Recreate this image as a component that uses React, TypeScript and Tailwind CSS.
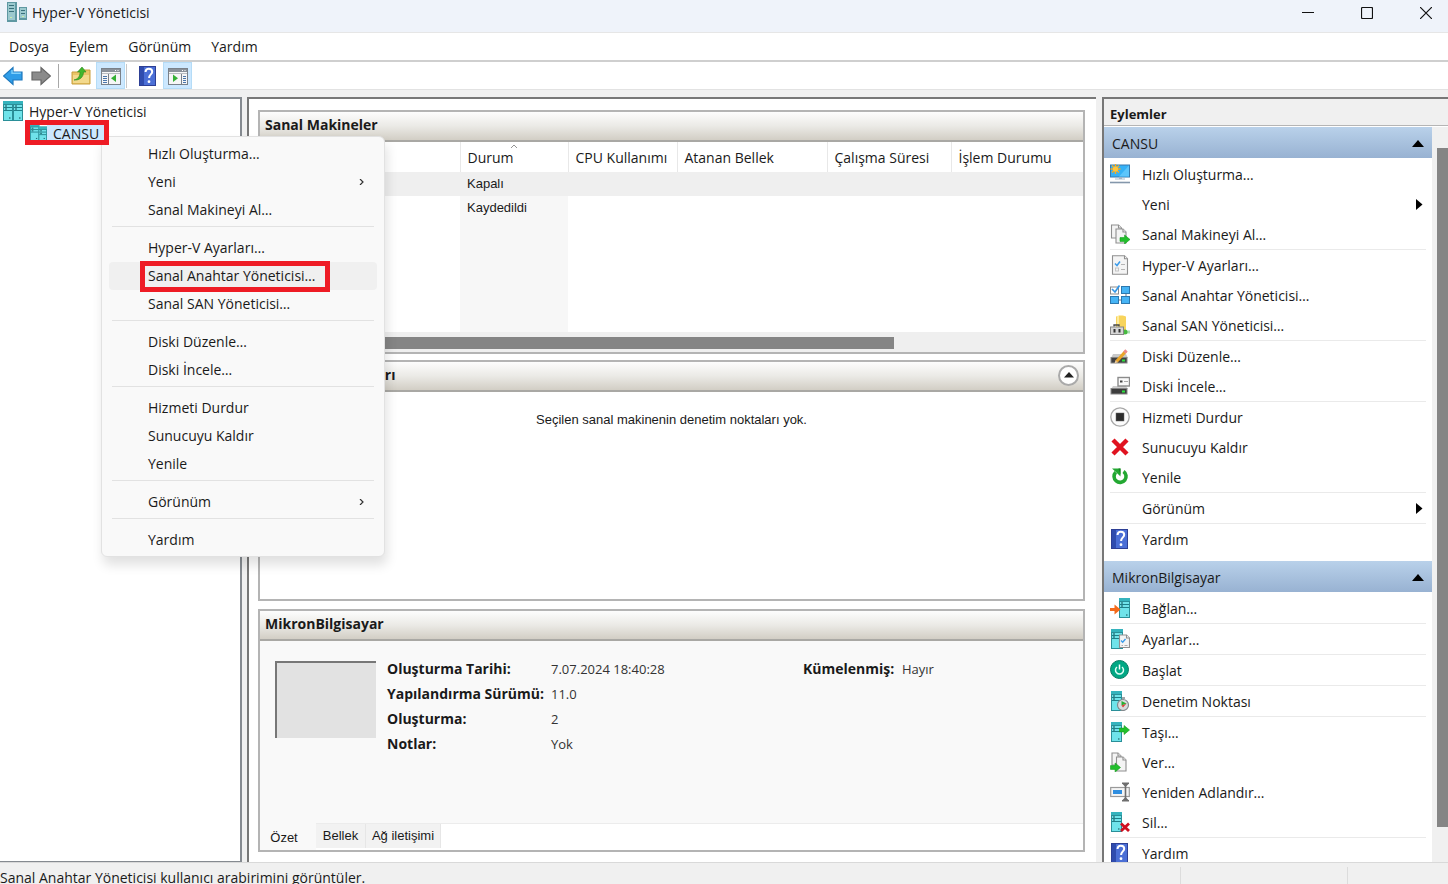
import type { ReactNode } from "react";

const HEADER_GRADIENT = "bg-linear-to-b from-[#fdfdfd] via-[#ebeae6] to-[#d2cec5]";

/* ---------- icons ---------- */

function Svg({ children, size = "size-5", box = "0 0 20 20" }: { children: ReactNode; size?: string; box?: string }) {
  return (
    <svg className={`${size} shrink-0`} viewBox={box} fill="none" aria-hidden="true">
      {children}
    </svg>
  );
}

function Tower({ x = 0, w = 11, y = 0, h = 20 }: { x?: number; w?: number; y?: number; h?: number }) {
  return (
    <g>
      <rect x={x} y={y} width={w} height={h} fill="#2a8f98" />
      <rect x={x + 1} y={y + 4} width={w - 2} height={h - 5} fill="#6fe3ea" />
      <rect x={x} y={y} width={w} height="3" fill="#35b3bd" />
      <path d={`M${x + 1} ${y + 6.5}h${w - 2}M${x + 1} ${y + 9.5}h${w - 2}`} stroke="#1f7f88" />
      <path d={`M${x + 2} ${y + 5}h2M${x + 2} ${y + 8}h2M${x + w - 4} ${y + h - 3}h1.5`} stroke="#134f57" />
    </g>
  );
}

function GreenArrow({ x, y }: { x: number; y: number }) {
  return (
    <path
      transform={`translate(${x} ${y})`}
      d="M0 2.6h4.6V0L10 4.5 4.6 9V6.4H0z"
      fill="#22c02c"
      stroke="#149a1d"
      strokeWidth="0.6"
    />
  );
}

function Page({ x, y, w = 9, h = 12 }: { x: number; y: number; w?: number; h?: number }) {
  return (
    <g stroke="#8f8f8f" strokeWidth="1.1" fill="#f4f4f4">
      <path d={`M${x} ${y}h${w - 3}l3 3v${h - 3}h-${w}z`} />
      <path d={`M${x + w - 3} ${y}v3h3`} />
    </g>
  );
}

const AppIcon = () => (
  <Svg>
    <rect x="0" y="0" width="10" height="20" fill="#5f98a2" />
    <rect x="1" y="1" width="7" height="17" fill="#9cc9ce" />
    <path d="M2 3.5h5M2 6.5h5M2 9.5h5" stroke="#39707b" />
    <rect x="12" y="5" width="8" height="13" fill="#5f98a2" />
    <rect x="13" y="6" width="6" height="10" fill="#9cc9ce" />
    <path d="M14 8.5h4M14 11.5h4" stroke="#39707b" />
    <path d="M3 15.5h2M15 14.5h2" stroke="#c9f1a9" />
  </Svg>
);

const RootIcon = () => (
  <Svg>
    <Tower x={0} w={10} />
    <Tower x={10} w={10} />
  </Svg>
);

const ServerIcon = () => (
  <Svg size="size-[17px]">
    <Tower x={0} w={11} y={0} h={20} />
    <Tower x={10} w={10} y={3} h={17} />
  </Svg>
);

const ArrowIcon = ({ forward }: { forward?: boolean }) => (
  <Svg>
    {forward ? (
      <path d="M1 6h9V1.5L19.5 10 10 18.5V14H1z" fill="#8b8b8b" stroke="#666" strokeWidth="1.2" />
    ) : (
      <>
        <path d="M19 6h-9V1.5L.5 10 10 18.5V14h9z" fill="#2f9de8" stroke="#2079bd" strokeWidth="1.2" />
        <path d="M9 4v3.2h8.8" stroke="#7fd0fb" strokeWidth="1.4" />
      </>
    )}
  </Svg>
);

const FolderIcon = () => (
  <Svg>
    <path d="M1 18V6h6l2-2h10v14z" fill="#e9c567" stroke="#c79e3d" />
    <path d="M2 9h16v8H2z" fill="#f3d98c" />
    <path d="M3 14C7 13 9 10.5 9 6H6.5L11 1l4 5h-2.5C12.5 11 9 14.5 3 14z" fill="#41b62d" stroke="#2a8a1b" strokeWidth="0.6" />
  </Svg>
);

const PaneIcon = ({ right }: { right?: boolean }) => (
  <Svg>
    <rect x="0.5" y="2.5" width="19" height="16" fill="#f6f6f6" stroke="#7a8189" />
    <rect x="1" y="3" width="18" height="3" fill="#8a919a" />
    <path d="M14 4.5h1M16.5 4.5h1" stroke="#fff" />
    <path d="M1 7.5h18" stroke="#b9bdc2" />
    {right ? (
      <>
        <path d="M13.5 8v10" stroke="#7a8189" />
        <path d="M15 10.5h3M15 12.5h3M15 14.5h3M15 16.5h3" stroke="#4a76ab" />
        <path d="M5 8.5v7.5l5-3.7z" fill="#35b035" />
      </>
    ) : (
      <>
        <path d="M7.5 8v10" stroke="#7a8189" />
        <path d="M2 10.5h4M2 12.5h4M2 14.5h4M2 16.5h4" stroke="#4a76ab" />
        <path d="M15 8.5v7.5l-5-3.7z" fill="#35b035" />
      </>
    )}
  </Svg>
);

const HelpIcon = () => (
  <Svg>
    <rect x="1.5" y="0.5" width="16" height="19" fill="#4b6fd6" stroke="#2d3f95" />
    <path d="M2 1h4v18H2z" fill="#2f4cae" />
    <path d="M7.5 6c.2-2.4 1.6-3.3 3.3-3.3 2 0 3.4 1.2 3.4 3 0 2.6-3.1 2.9-3.1 6.3" stroke="#fff" strokeWidth="2" />
    <circle cx="11" cy="15.7" r="1.4" fill="#fff" />
  </Svg>
);

const icons: Record<string, ReactNode> = {
  quick: (
    <Svg>
      <rect x="0.5" y="1" width="19" height="12" fill="#35b1f6" stroke="#3679ae" />
      <path d="M19 1.5 9 12.5h10z" fill="#5cc5fb" />
      <path d="M9 13h3v2H9z" fill="#9fb2c4" />
      <path d="M5 15h10" stroke="#a9bccd" />
      <path d="M0 18.5h20" stroke="#8497ab" strokeWidth="1.6" />
      <path d="M5.5 0v10M.5 5h10M2 1.5l7 7M9 1.5l-7 7" stroke="#f4ac23" strokeWidth="1.5" />
      <circle cx="5.5" cy="5" r="2.6" fill="#ffc63c" />
    </Svg>
  ),
  importVm: (
    <Svg>
      <Page x={1.5} y={1} w={10} h={13} />
      <Page x={6} y={5} w={10} h={14} />
      <GreenArrow x={10} y={11} />
    </Svg>
  ),
  settings: (
    <Svg>
      <Page x={2.5} y={0.7} w={15} h={18.5} />
      <path d="M5 8.5 7 10.5 10 6.5" stroke="#3c9cea" strokeWidth="1.5" />
      <path d="M11 9.5h4M11 14.5h4" stroke="#b5b5b5" />
      <rect x="5.5" y="13" width="3" height="3" stroke="#c4c4c4" />
    </Svg>
  ),
  vswitch: (
    <Svg>
      <path d="M8 15h4M16 8v4" stroke="#6b7b8b" />
      <rect x="0.5" y="2" width="8" height="7" fill="#fff" stroke="#8b8b8b" />
      <path d="m2 4 3 3 4.5-6.5" stroke="#3296e6" strokeWidth="1.7" />
      <rect x="11.5" y="1.5" width="8" height="7" fill="#46b4f5" stroke="#2d78ae" />
      <rect x="0.5" y="11.5" width="8" height="7" fill="#46b4f5" stroke="#2d78ae" />
      <rect x="11.5" y="11.5" width="8" height="7" fill="#46b4f5" stroke="#2d78ae" />
    </Svg>
  ),
  san: (
    <Svg>
      <path d="M6 2c0-2 10-2 10 0v13H6z" fill="#f8d45c" />
      <path d="M8 1v13" stroke="#fdeb9d" strokeWidth="2" />
      <path d="M12 17h8" stroke="#a9dfb0" strokeWidth="3" />
      <circle cx="15" cy="17" r="2.5" fill="#46b93f" />
      <path d="M4 11.5V10h5v1.5" stroke="#444" strokeWidth="1.3" />
      <rect x="0.5" y="12" width="13" height="7.5" fill="#d6d6d6" stroke="#858585" />
      <path d="M4.5 14v3.5M9.5 14v3.5" stroke="#333" strokeWidth="2" />
    </Svg>
  ),
  editDisk: (
    <Svg>
      <path d="M3 8h13l2 4H1z" fill="#c9c9c9" />
      <rect x="1" y="11.5" width="16" height="5.5" fill="#424242" stroke="#858585" />
      <path d="M12 14.5h3" stroke="#2de23f" strokeWidth="2" />
      <path d="M6.5 15.5 15.5 5.5" stroke="#eaa52a" strokeWidth="3.2" />
      <path d="m14.5 6.6 2-2.2" stroke="#ed8b8b" strokeWidth="3.2" />
      <path d="m4.5 17.5 1-3.2 2.5 2z" fill="#eccb9a" />
    </Svg>
  ),
  inspectDisk: (
    <Svg>
      <path d="M3 10h13l2 3H1z" fill="#cdcdcd" />
      <rect x="1" y="12.5" width="16" height="5.5" fill="#3c3c3c" stroke="#858585" />
      <path d="M12 15.5h3" stroke="#2de23f" strokeWidth="2" />
      <rect x="8" y="1.5" width="11.5" height="8.5" fill="#fafafa" stroke="#8b8b8b" strokeWidth="1.4" />
      <path d="M10 5.5h2.5" stroke="#444" strokeWidth="2" />
      <path d="M14 5.5h4" stroke="#aaa" />
    </Svg>
  ),
  stop: (
    <Svg>
      <circle cx="10" cy="10" r="9.2" fill="#fcfcfc" stroke="#a8a8a8" strokeWidth="1.3" />
      <rect x="6" y="6" width="8" height="8" fill="#2c2c2c" stroke="#666" strokeWidth="0.5" />
    </Svg>
  ),
  remove: (
    <Svg>
      <path d="m3 3 14 14M17 3 3 17" stroke="#e01320" strokeWidth="4.4" />
    </Svg>
  ),
  refresh: (
    <Svg>
      <path d="M13.5 4.5a6 6 0 1 1-7.8.8" stroke="#23a832" strokeWidth="3.6" />
      <path d="M2 1.5h8.5V9.5z" fill="#23a832" />
      <path d="M8.5 1.5h2V8z" fill="#168421" />
    </Svg>
  ),
  help: <HelpIcon />,
  connect: (
    <Svg>
      <Tower x={9} w={11} />
      <path d="M0 10h4.5V6.5l6 5-6 5V13H0z" fill="#f46a1b" />
    </Svg>
  ),
  vmSettings: (
    <Svg>
      <Tower x={1} w={12} />
      <Page x={9.5} y={6} w={10} h={12.5} />
      <path d="m11 11.5 1.7 1.7L15.5 10" stroke="#3c9cea" strokeWidth="1.4" />
      <path d="M11.5 16.5h1.5M14.5 16.5h3" stroke="#aaa" />
    </Svg>
  ),
  start: (
    <Svg>
      <circle cx="9.5" cy="9.5" r="9" fill="#00a884" stroke="#087a63" />
      <path d="M7 7a4 4 0 1 0 5 0" stroke="#e2fff7" strokeWidth="1.5" />
      <path d="M9.5 4.5v5" stroke="#fff" strokeWidth="1.5" />
    </Svg>
  ),
  checkpoint: (
    <Svg>
      <Tower x={1} w={11} />
      <circle cx="13" cy="14" r="5.5" fill="#d9dcde" stroke="#84898d" strokeWidth="1.2" />
      <path d="M12 7h3" stroke="#84898d" strokeWidth="1.5" />
      <path d="M11.5 10v4.5l5-2z" fill="#27b034" />
      <path d="m11.5 14.5 5-2-3.5 4z" fill="#d9453c" />
    </Svg>
  ),
  move: (
    <Svg>
      <Tower x={1} w={11} />
      <GreenArrow x={9.5} y={3.5} />
    </Svg>
  ),
  exportVm: (
    <Svg>
      <Page x={2} y={1} w={9} h={12} />
      <Page x={6.5} y={5} w={9.5} h={14} />
      <GreenArrow x={0.5} y={11} />
    </Svg>
  ),
  rename: (
    <Svg>
      <rect x="0.7" y="5.5" width="18.6" height="9" fill="#f5f5f5" stroke="#9a9a9a" strokeWidth="1.2" />
      <rect x="3" y="8" width="9" height="4" fill="#2f8ee0" />
      <path d="M15.5 1v18M12 1.2h7M12 18.8h7" stroke="#6e6e6e" strokeWidth="1.6" />
      <path d="M12.5 2h6l-3 3zM12.5 18h6l-3-3z" fill="#6e6e6e" />
    </Svg>
  ),
  del: (
    <Svg>
      <Tower x={1} w={11} />
      <path d="m11 11.5 8 7.5M19 11.5 11 19" stroke="#cf1020" strokeWidth="2.8" />
    </Svg>
  ),
};

/* ---------- data ---------- */

type Action = { label: string; icon?: string; sub?: boolean };

const serverActions: Action[][] = [
  [
    { label: "Hızlı Oluşturma…", icon: "quick" },
    { label: "Yeni", sub: true },
    { label: "Sanal Makineyi Al…", icon: "importVm" },
  ],
  [
    { label: "Hyper-V Ayarları…", icon: "settings" },
    { label: "Sanal Anahtar Yöneticisi…", icon: "vswitch" },
    { label: "Sanal SAN Yöneticisi…", icon: "san" },
  ],
  [
    { label: "Diski Düzenle…", icon: "editDisk" },
    { label: "Diski İncele…", icon: "inspectDisk" },
  ],
  [
    { label: "Hizmeti Durdur", icon: "stop" },
    { label: "Sunucuyu Kaldır", icon: "remove" },
    { label: "Yenile", icon: "refresh" },
  ],
  [{ label: "Görünüm", sub: true }],
  [{ label: "Yardım", icon: "help" }],
];

const vmActions: Action[][] = [
  [{ label: "Bağlan…", icon: "connect" }],
  [{ label: "Ayarlar…", icon: "vmSettings" }],
  [{ label: "Başlat", icon: "start" }],
  [{ label: "Denetim Noktası", icon: "checkpoint" }],
  [
    { label: "Taşı…", icon: "move" },
    { label: "Ver…", icon: "exportVm" },
    { label: "Yeniden Adlandır…", icon: "rename" },
    { label: "Sil…", icon: "del" },
  ],
  [{ label: "Yardım", icon: "help" }],
];

const details = [
  ["Oluşturma Tarihi:", "7.07.2024 18:40:28"],
  ["Yapılandırma Sürümü:", "11.0"],
  ["Oluşturma:", "2"],
  ["Notlar:", "Yok"],
];

/* ---------- pieces ---------- */

function TitleBar() {
  return (
    <header className="flex h-[33px] shrink-0 items-start border-b border-[#e6e6e6] bg-[#eff3fa] pl-[7px] pt-0.5">
      <AppIcon />
      <h1 className="grow pl-[5px] pt-px text-sm">Hyper-V Yöneticisi</h1>
      <div className="flex gap-[15px]">
        <button aria-label="Simge durumuna küçült" className="flex h-[22px] w-11 items-center justify-center">
          <Svg size="size-3" box="0 0 12 12"><path d="M0 5.5h12" stroke="#111" /></Svg>
        </button>
        <button aria-label="Ekranı kapla" className="flex h-[22px] w-11 items-center justify-center">
          <Svg size="size-3" box="0 0 12 12"><rect x="0.5" y="0.5" width="11" height="11" rx="1" stroke="#111" strokeWidth="1.2" /></Svg>
        </button>
        <button aria-label="Kapat" className="flex h-[22px] w-11 items-center justify-center">
          <Svg size="size-3" box="0 0 12 12"><path d="m0 0 12 12M12 0 0 12" stroke="#111" strokeWidth="1.2" /></Svg>
        </button>
      </div>
    </header>
  );
}

function Toolbar() {
  return (
    <div className="flex h-7 shrink-0 items-center border-b border-[#e2e2e2] bg-white pl-[3px]">
      <button aria-label="Geri"><ArrowIcon /></button>
      <button aria-label="İleri" className="ml-2"><ArrowIcon forward /></button>
      <span className="ml-[7px] h-6 w-px bg-[#a8a8a8]" />
      <button aria-label="Yukarı" className="ml-3"><FolderIcon /></button>
      <button aria-label="Konsol ağacı" className="ml-[5px] flex h-[27px] w-[29px] items-center justify-center border border-[#b5dcf7] bg-[#cce8ff]">
        <PaneIcon />
      </button>
      <span className="ml-px h-6 w-px bg-[#c8c8c8]" />
      <button aria-label="Yardım" className="ml-[11px]"><HelpIcon /></button>
      <button aria-label="Eylem bölmesi" className="ml-[5px] flex h-[27px] w-[29px] items-center justify-center border border-[#b5dcf7] bg-[#cce8ff]">
        <PaneIcon right />
      </button>
    </div>
  );
}

function ContextMenu() {
  return (
    <div
      role="menu"
      className="absolute left-[101px] top-[37px] z-10 w-[284px] rounded-md border border-[#e2e2e2] bg-[#f9f9f9] px-[7px] pb-0.5 pt-[3px] shadow-[2px_8px_12px_rgba(0,0,0,0.12)]"
    >
      {serverActions.map((group, i) => (
        <div key={i}>
          {i > 0 && <div className="mx-[3px] mb-[7px] mt-0.5 h-px bg-[#e2e2e2]" />}
          {group.map((a) => {
            const active = a.label.startsWith("Sanal Anahtar");
            return (
              <button
                key={a.label}
                role="menuitem"
                className={`relative flex h-7 w-full items-center justify-between rounded-sm pl-[39px] pr-3 text-left ${active ? "bg-[#f0f0f0]" : ""}`}
              >
                {a.label}
                {a.sub && (
                  <Svg size="size-1.5" box="0 0 6 6"><path d="m1 0 3 3-3 3" stroke="#333" strokeWidth="1.2" /></Svg>
                )}
                {active && <span className="absolute -top-px left-[31px] h-[31px] w-[190px] border-5 border-[#ee1c25]" />}
              </button>
            );
          })}
        </div>
      ))}
    </div>
  );
}

function Tree() {
  return (
    <nav className="relative w-[242px] shrink-0 border-b border-r-2 border-t-2 border-[#858a90] bg-white">
      <button className="flex h-6 items-center gap-1.5 pl-[3px]">
        <RootIcon />
        <span className="pt-0.5">Hyper-V Yöneticisi</span>
      </button>
      <button className="absolute left-[25px] top-[21px] z-20 flex h-[25px] w-[84px] items-center overflow-hidden border-5 border-[#ee1c25] bg-[#cce8ff]">
        <span className="bg-white"><ServerIcon /></span>
        <span className="pl-1.5 pt-0.5">CANSU</span>
      </button>
      <ContextMenu />
    </nav>
  );
}

function Panel({ title, extra, className, children }: { title: string; extra?: ReactNode; className: string; children: ReactNode }) {
  return (
    <section className={`flex flex-col border-2 border-[#b4b4b4] ${className}`}>
      <h2 className={`flex h-[30px] shrink-0 items-center justify-between border-b-2 border-[#a9a8a4] pb-0.5 pl-[5px] pr-1 font-bold ${HEADER_GRADIENT}`}>
        {title}
        {extra}
      </h2>
      {children}
    </section>
  );
}

function VmTable() {
  const heads = ["CPU Kullanımı", "Atanan Bellek", "Çalışma Süresi", "İşlem Durumu"];
  return (
    <table className="w-full table-fixed border-collapse text-left">
      <colgroup>
        <col className="w-[200px]" />
        <col className="w-[108px]" />
        <col className="w-[109px]" />
        <col className="w-[150px]" />
        <col className="w-[124px]" />
        <col />
      </colgroup>
      <thead>
        <tr className="h-[30px]">
          <th className="border-r border-[#e8e8e8]" />
          <th className="relative border-r border-[#e8e8e8] px-[7px] pt-0.5 font-normal">
            <span className="absolute left-[50px] top-0.5">
              <Svg size="size-1.5" box="0 0 6 6"><path d="m0 4 3-3 3 3" stroke="#777" strokeWidth="0.8" /></Svg>
            </span>
            Durum
          </th>
          {heads.map((h) => (
            <th key={h} className="whitespace-nowrap border-r border-[#e8e8e8] px-[7px] pt-0.5 font-normal last:border-r-0">{h}</th>
          ))}
        </tr>
      </thead>
      <tbody className="font-['Liberation_Sans',sans-serif] text-[13px]">
        <tr className="h-6 bg-[#efefef]">
          <td />
          <td className="px-[7px]">Kapalı</td>
          <td colSpan={4} />
        </tr>
        <tr className="h-6">
          <td />
          <td className="bg-[#f7f7f7] px-[7px]">Kaydedildi</td>
          <td colSpan={4} />
        </tr>
        <tr className="h-[112px]">
          <td />
          <td className="bg-[#f7f7f7]" />
          <td colSpan={4} />
        </tr>
      </tbody>
    </table>
  );
}

function Summary() {
  return (
    <>
      <div className="flex grow items-start bg-[#f9f9f9] pl-[15px] pt-5">
        <div className="h-[77px] w-[101px] shrink-0 border-l-2 border-t-2 border-[#777] bg-[#e2e2e2]" />
        <table className="-mt-[5px] ml-[11px] text-left">
          <tbody>
            {details.map(([k, v], i) => (
              <tr key={k} className="h-[25px]">
                <th className="w-[164px] whitespace-nowrap p-0 font-bold">{k}</th>
                <td className="w-[252px] p-0 text-[13px] text-[#333]">{v}</td>
                {i === 0 && (
                  <>
                    <th className="w-[99px] p-0 font-bold">Kümelenmiş:</th>
                    <td className="p-0 text-[13px] text-[#333]">Hayır</td>
                  </>
                )}
              </tr>
            ))}
          </tbody>
        </table>
      </div>
      <div role="tablist" className="flex h-[27px] shrink-0 items-start bg-white font-['Liberation_Sans',sans-serif] text-[13px]">
        <button role="tab" aria-selected="true" className="h-[27px] w-14 bg-[#f9f9f9] pr-2 pt-0.5">Özet</button>
        <div className="flex grow border-t border-[#ececec]">
          <button role="tab" className="h-6 w-[50px] border-r border-[#e6e6e6] bg-[#f2f2f2]">Bellek</button>
          <button role="tab" className="h-6 w-[75px] border-r border-[#e6e6e6] bg-[#f2f2f2]">Ağ iletişimi</button>
        </div>
      </div>
    </>
  );
}

function ActionGroup({ title, groups }: { title: string; groups: Action[][] }) {
  return (
    <section className="shrink-0">
      <h3 className="flex h-[31px] items-center justify-between bg-linear-to-b from-[#b9d1ea] to-[#98b2d2] pl-2 pr-[7px] pt-0.5">
        {title}
        <Svg size="h-2 w-3.5" box="0 0 14 8"><path d="M1 7 7 0l6 7z" fill="#000" /></Svg>
      </h3>
      <div className="pl-1.5 pt-px">
        {groups.map((group, i) => (
          <ul key={i} className={`mr-1.5 ${i > 0 ? "border-t border-[#eaeaea]" : ""}`}>
            {group.map((a) => (
              <li key={a.label}>
                <button className="flex h-[30px] w-full items-center gap-3 pr-[3px] pt-px text-left">
                  {a.icon ? <span className="-mt-0.5">{icons[a.icon]}</span> : <span className="w-5" />}
                  <span className="grow">{a.label}</span>
                  {a.sub && (
                    <Svg size="h-3 w-2" box="0 0 8 12"><path d="M1 0v11l6.500-5.500z" fill="#000" /></Svg>
                  )}
                </button>
              </li>
            ))}
          </ul>
        ))}
      </div>
    </section>
  );
}

function ActionsPane() {
  return (
    <aside className="ml-1.5 flex w-[346px] shrink-0 flex-col border-l-2 border-t-2 border-[#777] bg-white">
      <h2 className="h-[27px] shrink-0 border-b border-[#b5b5b5] bg-[#f0f0f0] pl-1.5 pt-[5px] text-[13px] font-bold">
        Eylemler
      </h2>
      <div className="flex min-h-0 grow pt-px">
        <div className="flex grow flex-col gap-[7px] overflow-hidden">
          <ActionGroup title="CANSU" groups={serverActions} />
          <ActionGroup title="MikronBilgisayar" groups={vmActions} />
        </div>
        <div className="flex w-4 shrink-0 bg-[#f0f0f0] pb-[35px] pl-[5px] pt-[21px]">
          <div className="grow bg-[#858585]" />
        </div>
      </div>
    </aside>
  );
}

export default function App() {
  return (
    <div className="flex h-screen flex-col overflow-hidden bg-[#f0f0f0] font-['Open_Sans','Noto_Sans',sans-serif] text-sm leading-5 text-[#1a1a1a]">
      <TitleBar />
      <nav className="flex h-[29px] shrink-0 items-center gap-5 border-b-2 border-[#cfcfcf] bg-white pl-[9px]">
        {["Dosya", "Eylem", "Görünüm", "Yardım"].map((m) => (
          <button key={m}>{m}</button>
        ))}
      </nav>
      <Toolbar />
      <div className="mt-[7px] flex min-h-0 grow">
        <Tree />
        <main className="ml-[5px] flex min-w-0 grow flex-col gap-1.5 border-l-2 border-t-2 border-[#777] bg-white pb-2.5 pl-[9px] pr-[11px] pt-[11px]">
          <Panel title="Sanal Makineler" className="h-[244px] shrink-0">
            <VmTable />
            <div className="grow bg-[#efefef] pt-[5px]">
              <div className="h-3 w-[77%] bg-[#858585]" />
            </div>
          </Panel>
          <Panel
            title="Denetim Noktaları"
            className="h-[241px] shrink-0"
            extra={
              <button aria-label="Daralt" className="flex size-[21px] items-center justify-center rounded-full border-2 border-[#aaa] bg-white">
                <Svg size="h-1.5 w-2.5" box="0 0 10 6"><path d="M0 5.5 5 0l5 5.5z" fill="#222" /></Svg>
              </button>
            }
          >
            <p className="pt-[18px] text-center font-['Liberation_Sans',sans-serif] text-[13px]">
              Seçilen sanal makinenin denetim noktaları yok.
            </p>
          </Panel>
          <Panel title="MikronBilgisayar" className="mt-0.5 min-h-0 grow">
            <Summary />
          </Panel>
        </main>
        <ActionsPane />
      </div>
      <footer className="flex h-[22px] shrink-0 border-t border-[#d9d9d9] pt-2">
        <p className="grow whitespace-nowrap leading-[14px]">Sanal Anahtar Yöneticisi kullanıcı arabirimini görüntüler.</p>
        <div className="-mt-1 w-[167px] border-l border-[#dcdcdc]" />
        <div className="-mt-1 w-[101px] border-l border-[#dcdcdc]" />
      </footer>
    </div>
  );
}
